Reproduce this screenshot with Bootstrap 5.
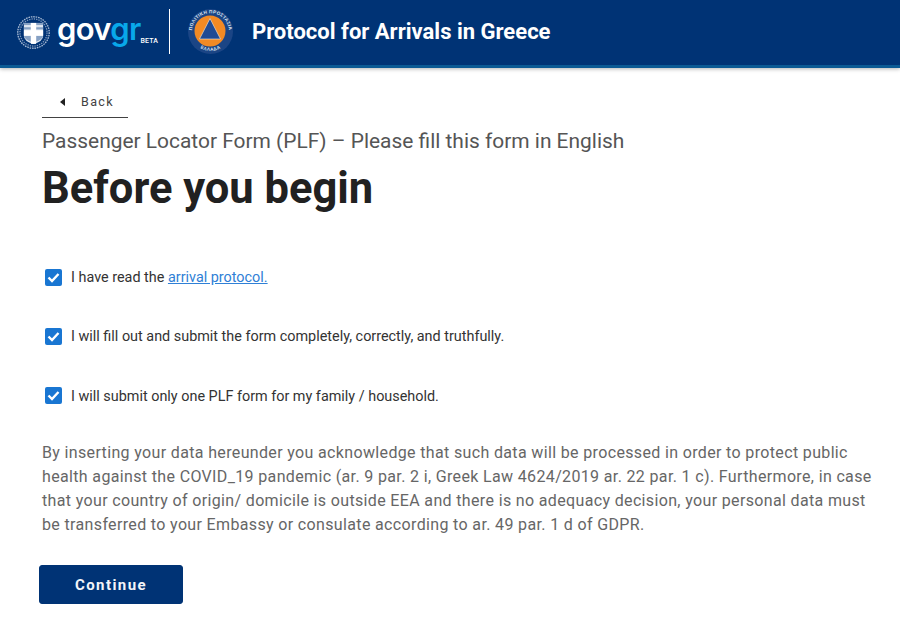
<!DOCTYPE html>
<html lang="en">
<head>
<meta charset="utf-8">
<title>Protocol for Arrivals in Greece</title>
<link rel="stylesheet" href="https://cdn.jsdelivr.net/npm/bootstrap@5.3.0/dist/css/bootstrap.min.css">
<style>
html,body{height:636px;overflow:hidden}
body{font-family:Roboto,"Liberation Sans",sans-serif;color:#212121;background:#fff}
.gov-head{height:68px;background:#003375;border-bottom:3px solid #0b5a94;box-shadow:0 1px 4px rgba(0,0,0,.3);padding-left:16px}
.emblem{width:35px;height:35px;margin-right:6px}
.wordmark{font-family:Inter,"Liberation Sans",sans-serif;font-weight:600;font-size:31px;line-height:36px;letter-spacing:-.7px;color:#fff;margin-top:-7px}
.wordmark span{color:#08a8ea}
.beta{font-family:Roboto,sans-serif;font-size:7px;font-weight:500;color:#fff;margin:17px 0 0 0;letter-spacing:.1px}
.divider{width:1px;height:45px;background:#fff;margin:-2px 18px 0 11px}
.civil{width:45px;height:45px;margin:-2px 19px 0 0}
.site-title{font-size:22px;font-weight:700;color:#fff;line-height:30px;margin-top:-2px}
.page-body{padding:0 27px 0 42px}
.back-link{width:86px;height:29px;margin-top:21px;border-bottom:1px solid #424242;color:#424242;font-size:12.5px;letter-spacing:1.35px;text-decoration:none;padding:0 0 2px 18px;gap:16px}
.back-tri{width:0;height:0;border-style:solid;border-width:4px 5px 4px 0;border-color:transparent #212121 transparent transparent}
.sub-title{font-size:20.93px;line-height:24px;color:#555;margin:11px 0 0}
.main-title{font-size:43.5px;font-weight:700;line-height:50px;color:#212121;margin:11px 0 0}
.check-list{margin-top:55px}
.check-item{height:18px;margin-bottom:41.3px;gap:10px;font-size:14.4px;line-height:18px;color:#333}
.check-box{width:17px;height:17px;margin:-2px 0 0 3px;flex:none;background:#1976d2;border-radius:2px}
.check-item span{margin-left:-1px}
.check-item a{color:#2f80d6}
.notice{font-size:16px;line-height:24px;letter-spacing:.35px;color:#666;margin:-6px 0 0}
.go-btn{width:144px;height:39px;margin:28px 0 0 -3px;background:#003375;border:1px solid #003375;border-radius:3px;color:#f2f5f9;font-size:15px;font-weight:700;letter-spacing:1.45px;padding:2px 0 0}
.go-btn:hover{background:#003375;color:#fff}
.ring-text{font-family:"Liberation Sans",sans-serif;font-size:4.6px;font-weight:700;fill:#dfe7f2;letter-spacing:.35px}
</style>
</head>
<body>
<header class="gov-head d-flex align-items-center">
  <svg class="emblem" viewBox="0 0 40 40" aria-label="Hellenic Republic emblem">
    <circle cx="20" cy="20" r="18" fill="none" stroke="#a9bcd5" stroke-width="1.500" stroke-dasharray="1.800 1"/>
    <circle cx="20" cy="20" r="15.500" fill="none" stroke="#7d97bb" stroke-width="1.500" stroke-dasharray="1.500 1.200"/>
    <path d="M9 9h22v15q0 6-11 9-11-3-11-9z" fill="#dfe7f1"/>
    <g fill="#86a1c4"><rect x="9" y="9" width="8" height="2.500"/><rect x="9" y="14" width="8" height="2.500"/><rect x="23" y="9" width="8" height="2.500"/><rect x="23" y="14" width="8" height="2.500"/><path d="M9 24h8v6.500q-6-1.500-8-6.500zM23 24h8q-2 5-8 6.500z"/></g>
    <rect x="17" y="9" width="6" height="24" fill="#fff"/><rect x="9" y="17.500" width="22" height="6" fill="#fff"/>
  </svg>
  <div class="wordmark">gov<span>gr</span></div>
  <div class="beta">BETA</div>
  <div class="divider"></div>
  <svg class="civil" viewBox="0 0 45 45" aria-label="Civil protection emblem">
    <defs>
      <path id="ringTop" d="M5.500 30A18.500 18.500 0 1 1 39.500 30"/>
      <path id="ringBottom" d="M10 37.500A20 20 0 0 0 35 37.500"/>
    </defs>
    <circle cx="22.500" cy="22.500" r="22.500" fill="#1b4585"/>
    <text class="ring-text"><textPath href="#ringTop" startOffset="50%" text-anchor="middle">ΠΟΛΙΤΙΚΗ ΠΡΟΣΤΑΣΙΑ</textPath></text>
    <text class="ring-text"><textPath href="#ringBottom" startOffset="50%" text-anchor="middle">ΕΛΛΑΔΑ</textPath></text>
    <circle cx="22" cy="22" r="15.500" fill="#f28a24"/>
    <path d="M22 9.500 32.500 30h-21z" fill="#1f4a94" stroke="#f2e9dc" stroke-width=".6" stroke-linejoin="round"/>
  </svg>
  <div class="site-title">Protocol for Arrivals in Greece</div>
</header>
<main class="page-body">
  <a href="#" class="back-link d-flex align-items-center"><span class="back-tri"></span>Back</a>
  <div class="sub-title">Passenger Locator Form (PLF) – Please fill this form in English</div>
  <h1 class="main-title">Before you begin</h1>
  <div class="check-list">
    <div class="check-item d-flex align-items-center">
      <svg class="check-box" viewBox="0 0 17 17"><path d="M3.500 8.500 7 12l6.500-7" fill="none" stroke="#fff" stroke-width="2.400"/></svg>
      <span>I have read the <a href="#">arrival protocol.</a></span>
    </div>
    <div class="check-item d-flex align-items-center">
      <svg class="check-box" viewBox="0 0 17 17"><path d="M3.500 8.500 7 12l6.500-7" fill="none" stroke="#fff" stroke-width="2.400"/></svg>
      <span>I will fill out and submit the form completely, correctly, and truthfully.</span>
    </div>
    <div class="check-item d-flex align-items-center">
      <svg class="check-box" viewBox="0 0 17 17"><path d="M3.500 8.500 7 12l6.500-7" fill="none" stroke="#fff" stroke-width="2.400"/></svg>
      <span>I will submit only one PLF form for my family / household.</span>
    </div>
  </div>
  <p class="notice">By inserting your data hereunder you acknowledge that such data will be processed in order to protect public health against the COVID_19 pandemic (ar. 9 par. 2 i, Greek Law 4624/2019 ar. 22 par. 1 c). Furthermore, in case that your country of origin/ domicile is outside EEA and there is no adequacy decision, your personal data must be transferred to your Embassy or consulate according to ar. 49 par. 1 d of GDPR.</p>
  <button type="button" class="btn go-btn d-block">Continue</button>
</main>
<script src="https://cdn.jsdelivr.net/npm/bootstrap@5.3.0/dist/js/bootstrap.bundle.min.js"></script>
</body>
</html>
